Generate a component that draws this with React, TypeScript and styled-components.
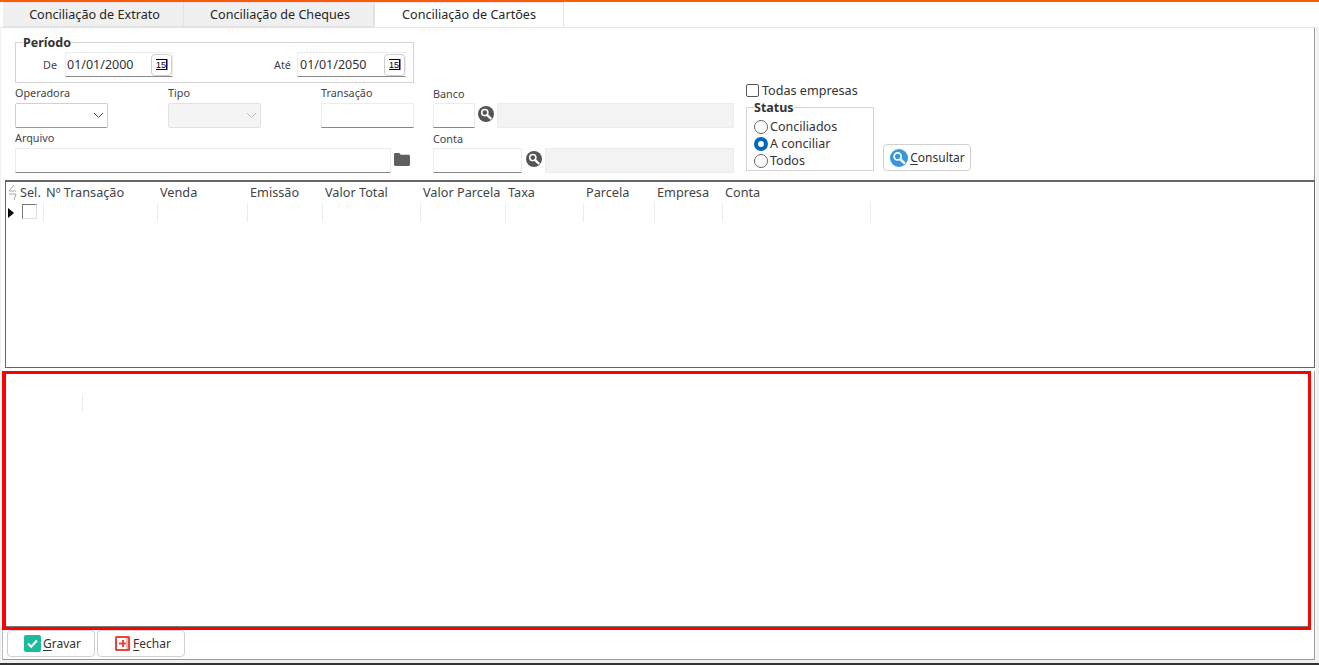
import styled, { createGlobalStyle } from 'styled-components';

const GlobalStyle = createGlobalStyle`
    html, body {
        margin: 0;
        padding: 0;
        background: #fff;
        overflow: hidden;
    }
    * {
        box-sizing: border-box;
    }
`;

const Window = styled.div`
    width: 1319px;
    height: 665px;
    display: flex;
    flex-direction: column;
    background: #f0f0f0;
    font-family: "Noto Sans", "Open Sans", sans-serif;
    font-size: 12px;
    color: #333;
    border-top: 2px solid #ff5a0a;
    border-bottom: 2px solid #333;
`;

const TabBar = styled.div`
    display: flex;
    height: 25px;
    padding-left: 3px;
    background: #fff;
    flex: none;
`;

const Tab = styled.div<{ $active?: boolean; $width: number }>`
    width: ${(p) => p.$width}px;
    display: flex;
    align-items: center;
    justify-content: center;
    padding-left: ${(p) => (p.$active ? 0 : 3)}px;
    background: ${(p) => (p.$active ? '#fff' : '#f0f0f0')};
    border: 1px solid #e3e3e3;
    border-left-width: ${(p) => (p.$active ? 1 : 0)}px;
    border-bottom-color: ${(p) => (p.$active ? '#fff' : '#e3e3e3')};
    color: #262626;
    font-size: 12.6px;
`;

const Body = styled.div`
    flex: 1;
    display: flex;
    flex-direction: column;
    background: #fff;
    margin: 0 3px 3px 1px;
    min-height: 0;
    border-top: 1px solid #e3e3e3;
`;

const Filters = styled.div`
    height: 152px;
    flex: none;
    display: flex;
    margin-right: 1px;
    padding: 8px 0 0 14px;
    border-right: 1px solid #999;
`;

const LeftColumn = styled.div`
    width: 399px;
    display: flex;
    flex-direction: column;
`;

const Fieldset = styled.fieldset`
    margin: 0;
    padding: 0;
    border: 1px solid #d5d5d5;
`;

const Legend = styled.legend<{ $left: number }>`
    margin-left: ${(p) => p.$left}px;
    padding: 0;
    font-size: 12.5px;
    font-weight: 700;
    line-height: 13px;
    color: #333;
`;

const PeriodFieldset = styled(Fieldset)`
    height: 47px;
    display: flex;
    align-items: flex-start;
`;

const PeriodBody = styled.div`
    display: flex;
    align-items: center;
    padding-left: 27px;
    margin-top: 3px;
`;

const InlineLabel = styled.span<{ $width: number }>`
    width: ${(p) => p.$width}px;
    font-size: 10.8px;
    color: #444;
`;

const DateBox = styled.div<{ $width: number; $mr?: number; $pl: number }>`
    width: ${(p) => p.$width}px;
    height: 25px;
    margin-right: ${(p) => p.$mr ?? 0}px;
    display: flex;
    align-items: center;
    justify-content: space-between;
    padding-left: ${(p) => p.$pl}px;
    border: 1px solid #ececec;
    border-bottom: 1px solid #888;
    font-size: 12.5px;
    color: #333;
`;

const CalendarButton = styled.div`
    width: 21px;
    height: 22px;
    display: flex;
    align-items: center;
    justify-content: center;
    border: 1px solid #cfcfcf;
    border-radius: 4px;
    background: #fff;
`;

const FieldRow = styled.div<{ $mt: number; $gap?: number }>`
    display: flex;
    gap: ${(p) => p.$gap ?? 60}px;
    margin-top: ${(p) => p.$mt}px;
`;

const Field = styled.div<{ $width: number }>`
    width: ${(p) => p.$width}px;
    display: flex;
    flex-direction: column;
`;

const FieldLabel = styled.label`
    height: 20px;
    line-height: 20px;
    font-size: 10.8px;
    color: #444;
`;

const TextBox = styled.div<{ $width?: number }>`
    width: ${(p) => (p.$width ? `${p.$width}px` : '100%')};
    height: 25px;
    flex: none;
    border: 1px solid #ececec;
    border-bottom: 1px solid #888;
    background: #fff;
`;

const SelectBox = styled.div<{ $disabled?: boolean }>`
    height: 25px;
    display: flex;
    align-items: center;
    justify-content: flex-end;
    padding-right: 3px;
    border: 1px solid ${(p) => (p.$disabled ? '#e2e2e2' : '#d0d0d0')};
    border-bottom-color: ${(p) => (p.$disabled ? '#e2e2e2' : '#999')};
    border-radius: 2px;
    background: ${(p) => (p.$disabled ? '#f4f4f4' : '#fff')};
`;

const InputWithAction = styled.div`
    display: flex;
    align-items: center;
`;

const ReadonlyBox = styled.div`
    flex: 1;
    height: 25px;
    background: #f3f3f3;
    border: 1px solid #ececec;
    border-radius: 1px;
`;

const MiddleColumn = styled.div`
    width: 301px;
    margin-left: 19px;
    padding-top: 47px;
    display: flex;
    flex-direction: column;

    ${FieldLabel} {
        line-height: 22px;
    }
`;

const RightColumn = styled.div`
    width: 128px;
    margin-left: 12px;
    padding-top: 46px;
    display: flex;
    flex-direction: column;
`;

const CheckRow = styled.div`
    display: flex;
    align-items: center;
    gap: 3px;
    height: 16px;
    font-size: 12.6px;
`;

const CheckBox = styled.span`
    width: 13px;
    height: 13px;
    border: 1px solid #555;
    border-radius: 2px;
    background: #fff;
`;

const StatusFieldset = styled(Fieldset)`
    height: 70px;
    margin-top: 3px;
    padding: 4px 0 0 7px;
`;

const RadioRow = styled.div`
    display: flex;
    align-items: center;
    gap: 2px;
    height: 17px;
    font-size: 12.5px;
`;

const Radio = styled.span<{ $checked?: boolean }>`
    width: 14px;
    height: 14px;
    border-radius: 50%;
    background: #fff;
    border: ${(p) => (p.$checked ? '4px solid #0067c0' : '1px solid #666')};
`;

const ActionColumn = styled.div`
    margin-left: 9px;
    padding-top: 108px;
`;

const Button = styled.div<{ $width: number; $pl: number }>`
    width: ${(p) => p.$width}px;
    height: 27px;
    display: flex;
    align-items: center;
    justify-content: center;
    gap: 2px;
    padding-left: ${(p) => p.$pl}px;
    border: 1px solid #d0d0d0;
    border-radius: 4px;
    background: #fff;
    font-size: 12px;
    color: #333;

    u {
        text-underline-offset: 2px;
    }
`;

const GridFrame = styled.div`
    height: 188px;
    flex: none;
    margin: 0 1px 0 4px;
    border: 1px solid #666;
    border-top-width: 2px;
    background: #fff;
`;

const columns = '12px 26px 114px 90px 75px 98px 85px 78px 71px 68px 148px';

const HeaderRow = styled.div`
    display: grid;
    grid-template-columns: ${columns};
    height: 21px;
`;

const HeaderCell = styled.div`
    display: flex;
    align-items: center;
    padding: 0 0 2px 2px;
    font-size: 12.7px;
    color: #444;
    white-space: nowrap;
`;

const CornerCell = styled.div`
    display: flex;
    align-items: center;
    padding-left: 1px;
`;

const DataRow = styled.div`
    display: grid;
    grid-template-columns: ${columns};
    height: 19px;
`;

const DataCell = styled.div`
    border-right: 1px solid #ececec;
`;

const IndicatorCell = styled.div`
    display: flex;
    align-items: center;
    padding-left: 2px;
`;

const Arrow = styled.span`
    width: 0;
    height: 0;
    border-left: 6px solid #000;
    border-top: 5px solid transparent;
    border-bottom: 5px solid transparent;
`;

const SelectCell = styled(DataCell)`
    display: flex;
    align-items: flex-start;
    padding: 1px 0 0 4px;
`;

const GridCheck = styled.span`
    width: 15px;
    height: 15px;
    border: 1px solid #777;
    border-bottom-color: #ddd;
    border-right-color: #ddd;
    background: #fff;
`;

const DetailSection = styled.div`
    flex: 1;
    margin: 3px 1px 0 1px;
    min-height: 0;
    display: flex;
    flex-direction: column;
    border-right: 1px solid #999;
`;

const Highlight = styled.div`
    height: 259px;
    flex: none;
    margin-right: 3px;
    border: 3px solid #f00;
    border-left-width: 4px;
    background: #fff;
    box-shadow: inset 0 -1px 0 #777;
    padding: 20px 0 0 76px;
`;

const Tick = styled.div`
    width: 1px;
    height: 18px;
    background: #ececec;
`;

const Footer = styled.div`
    flex: 1;
    display: flex;
    gap: 2px;
    padding: 0 0 0 4px;
    border-left: 1px solid #bbb;
    border-bottom: 1px solid #999;
    background: #fff;
`;

const CalendarIcon = () => (
    <svg width="13" height="13" viewBox="0 0 13 13">
        <rect x="1" y="1" width="10" height="1" fill="#000" />
        <rect x="11" y="1" width="1.5" height="11" fill="#000080" />
        <text x="6" y="10" fontSize="9" textAnchor="middle" fontFamily="Liberation Sans, sans-serif" fill="#000">15</text>
        <rect x="1" y="11" width="10" height="1" fill="#000" />
    </svg>
);

const Chevron = (props: { color: string }) => (
    <svg width="11" height="7" viewBox="0 0 11 7">
        <path d="M1 1l4.5 4.5L10 1" fill="none" stroke={props.color} strokeWidth="1" />
    </svg>
);

const FolderIcon = () => (
    <svg width="16" height="13" viewBox="0 0 16 13">
        <path d="M0 1.5C0 .7.6 0 1.4 0h3.8l1.6 1.8h7.8c.8 0 1.4.6 1.4 1.4v8.4c0 .8-.6 1.4-1.4 1.4H1.4C.6 13 0 12.4 0 11.6z" fill="#5f5f5f" />
    </svg>
);

const SearchIcon = (props: { size: number; color: string }) => (
    <svg width={props.size} height={props.size} viewBox="0 0 16 16">
        <circle cx="8" cy="8" r="8" fill={props.color} />
        <circle cx="6.8" cy="6.6" r="3.1" fill={props.color} stroke="#fff" strokeWidth="1.5" />
        <path d="M9.2 9.1l3.4 3.3" stroke="#fff" strokeWidth="2.2" strokeLinecap="round" />
    </svg>
);

const SaveIcon = () => (
    <svg width="17" height="17" viewBox="0 0 17 17">
        <rect width="17" height="17" rx="2" fill="#1abc9c" />
        <path d="M4 8.5l3.2 3.2L13 5.6" fill="none" stroke="#fff" strokeWidth="2.2" />
    </svg>
);

const CloseIcon = () => (
    <svg width="17" height="17" viewBox="0 0 17 17">
        <rect x="1" y="1" width="15" height="15" rx="1.5" fill="#e8443a" />
        <rect x="3" y="3" width="11" height="11" fill="#fff" />
        <rect x="12" y="3" width="2" height="11" fill="#f7b5b0" />
        <path d="M5 7.5h3V5h2v2.5h2v2h-2V12H8V9.5H5z" fill="#e8443a" />
    </svg>
);

const SortGlyph = () => (
    <svg width="10" height="18" viewBox="0 0 10 18">
        <path d="M7 1L2 7h7M2 10h7L7 16" fill="none" stroke="#aaa" strokeWidth="1" />
    </svg>
);

const headers = ['Sel.', 'Nº Transação', 'Venda', 'Emissão', 'Valor Total', 'Valor Parcela', 'Taxa', 'Parcela', 'Empresa', 'Conta'];

const ActionIcon = styled.span<{ $ml: number; $mr: number }>`
    display: flex;
    margin: -3px ${(p) => p.$mr}px 0 ${(p) => p.$ml}px;
`;

const App = (): JSX.Element => {
    return (
        <Window>
            <GlobalStyle />
            <TabBar>
                <Tab $width={181}>Conciliação de Extrato</Tab>
                <Tab $width={190}>Conciliação de Cheques</Tab>
                <Tab $width={190} $active>Conciliação de Cartões</Tab>
            </TabBar>
            <Body>
                <Filters>
                    <LeftColumn>
                        <PeriodFieldset>
                            <Legend $left={7}>Período</Legend>
                            <PeriodBody>
                                <InlineLabel $width={22}>De</InlineLabel>
                                <DateBox $width={108} $mr={101} $pl={1}>
                                    01/01/2000
                                    <CalendarButton><CalendarIcon /></CalendarButton>
                                </DateBox>
                                <InlineLabel $width={23}>Até</InlineLabel>
                                <DateBox $width={109} $pl={2}>
                                    01/01/2050
                                    <CalendarButton><CalendarIcon /></CalendarButton>
                                </DateBox>
                            </PeriodBody>
                        </PeriodFieldset>
                        <FieldRow $mt={0}>
                            <Field $width={93}>
                                <FieldLabel>Operadora</FieldLabel>
                                <SelectBox><Chevron color="#555" /></SelectBox>
                            </Field>
                            <Field $width={93}>
                                <FieldLabel>Tipo</FieldLabel>
                                <SelectBox $disabled><Chevron color="#bbb" /></SelectBox>
                            </Field>
                            <Field $width={93}>
                                <FieldLabel>Transação</FieldLabel>
                                <TextBox />
                            </Field>
                        </FieldRow>
                        <Field $width={399}>
                            <FieldLabel>Arquivo</FieldLabel>
                            <InputWithAction>
                                <TextBox $width={376} />
                                <ActionIcon $ml={3} $mr={0}><FolderIcon /></ActionIcon>
                            </InputWithAction>
                        </Field>
                    </LeftColumn>
                    <MiddleColumn>
                        <Field $width={301}>
                            <FieldLabel>Banco</FieldLabel>
                            <InputWithAction>
                                <TextBox $width={42} />
                                <ActionIcon $ml={3} $mr={3}><SearchIcon size={16} color="#555" /></ActionIcon>
                                <ReadonlyBox />
                            </InputWithAction>
                        </Field>
                        <Field $width={301}>
                            <FieldLabel>Conta</FieldLabel>
                            <InputWithAction>
                                <TextBox $width={89} />
                                <ActionIcon $ml={4} $mr={3}><SearchIcon size={16} color="#555" /></ActionIcon>
                                <ReadonlyBox />
                            </InputWithAction>
                        </Field>
                    </MiddleColumn>
                    <RightColumn>
                        <CheckRow>
                            <CheckBox />
                            Todas empresas
                        </CheckRow>
                        <StatusFieldset>
                            <Legend $left={0}>Status</Legend>
                            <RadioRow><Radio />Conciliados</RadioRow>
                            <RadioRow><Radio $checked />A conciliar</RadioRow>
                            <RadioRow><Radio />Todos</RadioRow>
                        </StatusFieldset>
                    </RightColumn>
                    <ActionColumn>
                        <Button $width={88} $pl={1}>
                            <SearchIcon size={18} color="#3498db" />
                            <span><u>C</u>onsultar</span>
                        </Button>
                    </ActionColumn>
                </Filters>
                <GridFrame>
                    <HeaderRow>
                        <CornerCell><SortGlyph /></CornerCell>
                        {headers.map((h) => <HeaderCell key={h}>{h}</HeaderCell>)}
                    </HeaderRow>
                    <DataRow>
                        <IndicatorCell><Arrow /></IndicatorCell>
                        <SelectCell><GridCheck /></SelectCell>
                        {headers.slice(1).map((h) => <DataCell key={h} />)}
                    </DataRow>
                </GridFrame>
                <DetailSection>
                    <Highlight><Tick /></Highlight>
                    <Footer>
                        <Button $width={88} $pl={3}>
                            <SaveIcon />
                            <span><u>G</u>ravar</span>
                        </Button>
                        <Button $width={88} $pl={3}>
                            <CloseIcon />
                            <span><u>F</u>echar</span>
                        </Button>
                    </Footer>
                </DetailSection>
            </Body>
        </Window>
    );
};

export default App;
